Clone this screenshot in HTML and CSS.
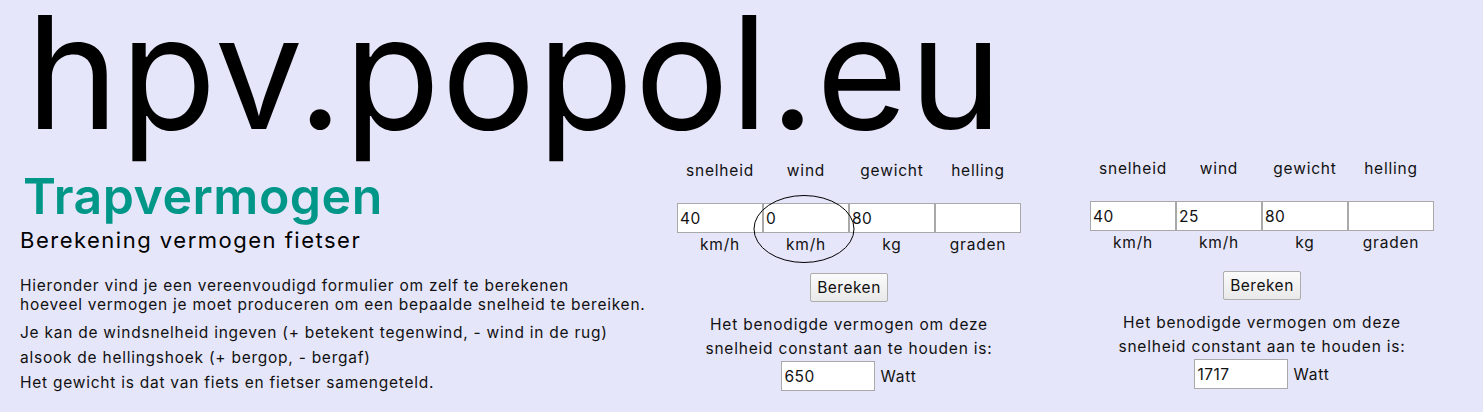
FILE: index.html
```html
<!DOCTYPE html>
<html lang="nl">
<head>
<meta charset="utf-8">
<title>hpv.popol.eu - Trapvermogen</title>
<link rel="stylesheet" href="styles.css">
</head>
<body>
<header class="site-header">
  <h1 class="site-title">hpv.popol.eu</h1>
</header>
<main class="content">
  <section class="intro">
    <h2 class="intro-title">Trapvermogen</h2>
    <h3 class="intro-subtitle">Berekening vermogen fietser</h3>
    <p class="intro-text">Hieronder vind je een vereenvoudigd formulier om zelf te berekenen<br>hoeveel vermogen je moet produceren om een bepaalde snelheid te bereiken.</p>
    <p class="intro-line">Je kan de windsnelheid ingeven (+ betekent tegenwind, - wind in de rug)</p>
    <p class="intro-line">alsook de hellingshoek (+ bergop, - bergaf)</p>
    <p class="intro-line">Het gewicht is dat van fiets en fietser samengeteld.</p>
  </section>

  <form class="calc">
    <div class="calc-row calc-labels">
      <span class="calc-cell">snelheid</span>
      <span class="calc-cell">wind</span>
      <span class="calc-cell">gewicht</span>
      <span class="calc-cell">helling</span>
    </div>
    <div class="calc-row calc-inputs">
      <input class="calc-input" type="text" value="40">
      <input class="calc-input" type="text" value="0">
      <input class="calc-input" type="text" value="80">
      <input class="calc-input" type="text" value="">
    </div>
    <div class="calc-row calc-units">
      <span class="calc-cell">km/h</span>
      <span class="calc-cell">km/h</span>
      <span class="calc-cell">kg</span>
      <span class="calc-cell">graden</span>
    </div>
    <button class="calc-button" type="button">Bereken</button>
    <p class="calc-result-text">Het benodigde vermogen om deze<br>snelheid constant aan te houden is:</p>
    <div class="calc-result">
      <input class="calc-output" type="text" value="650">
      <span class="calc-output-unit">Watt</span>
    </div>
    <svg class="calc-mark" width="102" height="70" viewBox="0 0 102 70" aria-hidden="true">
      <ellipse cx="51" cy="35" rx="50" ry="33.5" fill="none" stroke="#000" stroke-width="1"/>
    </svg>
  </form>

  <form class="calc calc-second">
    <div class="calc-row calc-labels">
      <span class="calc-cell">snelheid</span>
      <span class="calc-cell">wind</span>
      <span class="calc-cell">gewicht</span>
      <span class="calc-cell">helling</span>
    </div>
    <div class="calc-row calc-inputs">
      <input class="calc-input" type="text" value="40">
      <input class="calc-input" type="text" value="25">
      <input class="calc-input" type="text" value="80">
      <input class="calc-input" type="text" value="">
    </div>
    <div class="calc-row calc-units">
      <span class="calc-cell">km/h</span>
      <span class="calc-cell">km/h</span>
      <span class="calc-cell">kg</span>
      <span class="calc-cell">graden</span>
    </div>
    <button class="calc-button" type="button">Bereken</button>
    <p class="calc-result-text">Het benodigde vermogen om deze<br>snelheid constant aan te houden is:</p>
    <div class="calc-result">
      <input class="calc-output" type="text" value="1717">
      <span class="calc-output-unit">Watt</span>
    </div>
  </form>
</main>
</body>
</html>
```

FILE: styles.css
```css
html, body {
  margin: 0;
  padding: 0;
}

body {
  background: #e6e6fa;
  color: #111;
  font-family: "Inter", "Liberation Sans", sans-serif;
  height: 412px;
  overflow: hidden;
}

.site-header {
  padding: 0 0 0 26px;
  height: 160px;
}

.site-title {
  margin: 0;
  font-size: 157px;
  font-weight: 400;
  line-height: 144px;
  color: #000;
  letter-spacing: 1.4px;
  white-space: nowrap;
}

.content {
  display: flex;
  align-items: flex-start;
  padding-left: 20px;
}

.intro {
  width: 657px;
  flex: none;
}

.intro-title {
  margin: 8px 0 0 3px;
  font-size: 50px;
  line-height: 56px;
  font-weight: 600;
  color: #009688;
  letter-spacing: 0.5px;
}

.intro-subtitle {
  margin: 3px 0 0;
  font-size: 22px;
  line-height: 26px;
  font-weight: 400;
  color: #000;
  letter-spacing: 1.5px;
}

.intro-text,
.intro-line {
  margin: 0;
  font-size: 15.5px;
  letter-spacing: 0.75px;
}

.intro-text {
  margin-top: 23px;
  line-height: 19px;
}

.intro-line {
  line-height: 25px;
}

.intro-text + .intro-line {
  margin-top: 6px;
}

.calc {
  position: relative;
  width: 344px;
  flex: none;
  display: flex;
  flex-direction: column;
  align-items: center;
  margin-top: -1px;
  font-size: 15.5px;
  letter-spacing: 0.8px;
}

.calc-second {
  margin-left: 69px;
  margin-top: -3px;
}

.calc-row {
  display: flex;
  width: 344px;
}

.calc-cell {
  width: 86px;
  text-align: center;
  line-height: 24px;
}

.calc-labels {
  margin-bottom: 20px;
}

.calc-input,
.calc-output {
  box-sizing: border-box;
  height: 30px;
  margin: 0;
  padding: 1px 2px;
  border: 1px solid #a9a9a9;
  background: #fff;
  font-family: inherit;
  font-size: 15.5px;
  letter-spacing: 0.5px;
  color: #111;
  outline: none;
}

.calc-input {
  width: 86px;
}

.calc-button {
  margin-top: 16px;
  height: 29px;
  width: 78px;
  padding: 0;
  border: 1px solid #adadad;
  border-radius: 2px;
  background: linear-gradient(#fbfbfb, #e9e9e9);
  font-family: inherit;
  font-size: 15.5px;
  letter-spacing: 0.5px;
  color: #111;
}

.calc-result-text {
  margin: 11px 0 0;
  text-align: center;
  line-height: 24px;
}

.calc-result {
  display: flex;
  align-items: center;
  gap: 5px;
  margin-top: 0;
}

.calc-output {
  width: 94px;
}

.calc-mark {
  position: absolute;
  left: 76px;
  top: 35px;
  pointer-events: none;
}
```
